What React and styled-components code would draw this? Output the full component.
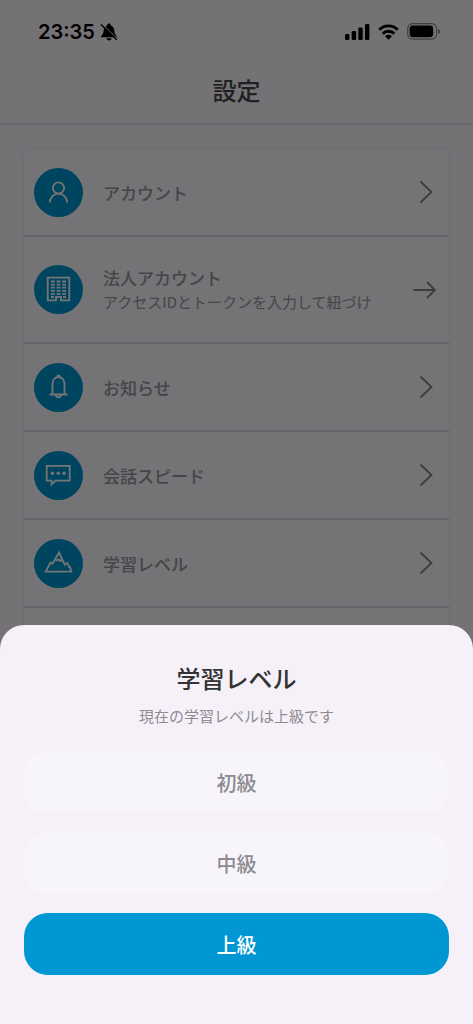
import React from "react";
import styled, { createGlobalStyle } from "styled-components";

const GlobalStyle = createGlobalStyle`
  * {
    box-sizing: border-box;
  }
  body {
    margin: 0;
    background: #fcf8ff;
    font-family: "Noto Sans CJK JP", sans-serif;
  }
  button {
    font-family: inherit;
    border: 0;
    cursor: pointer;
  }
`;

const Screen = styled.div`
  height: 100vh;
  overflow: hidden;
`;

const StatusBar = styled.div`
  display: flex;
  align-items: center;
  justify-content: space-between;
  height: 63px;
  padding: 0 32px 0 38px;
  color: #000;
`;

const Clock = styled.div`
  display: flex;
  align-items: center;
  gap: 5px;
  font-family: Inter, sans-serif;
  font-size: 20px;
  font-weight: 600;
`;

const Signals = styled.div`
  display: flex;
  align-items: center;
  gap: 8px;
`;

const Header = styled.header`
  display: flex;
  justify-content: center;
  height: 62px;
  padding-top: 9px;
  border-bottom: 2px solid #e9e5ed;

  h1 {
    margin: 0;
    color: #48474c;
    font-size: 24px;
    font-weight: 500;
    line-height: 36px;
  }
`;

const Card = styled.ul`
  list-style: none;
  margin: 24px;
  padding: 0 0 80px;
  border-radius: 8px;
  background: #fcfaff;
  box-shadow: 0 0 5px rgba(0, 0, 0, 0.1);
`;

const Row = styled.li`
  border-bottom: 2px solid #e0dde4;
`;

const RowButton = styled.button`
  display: flex;
  align-items: center;
  gap: 20px;
  width: 100%;
  min-height: ${props => (props.$tall ? "105px" : "86px")};
  padding: 0 10px;
  background: transparent;
  text-align: left;
`;

const IconCircle = styled.span`
  flex: none;
  height: 49px;
  border-radius: 50%;
  background: #0097d2;

  svg {
    display: block;
    fill: none;
    stroke: #fff;
    stroke-width: 1.8;
  }
`;

const RowText = styled.span`
  flex: 1;
  color: #98969d;

  strong {
    display: block;
    font-size: 17px;
    font-weight: 500;
    line-height: 25px;
  }
  small {
    display: block;
    font-size: 15px;
    line-height: 24px;
  }
`;

const Indicator = styled.svg`
  flex: none;
  width: 24px;
  height: 24px;
  margin-right: ${props => (props.$arrow ? "2px" : "0")};
  fill: none;
  stroke: #85838a;
  stroke-width: 1.8;
  stroke-linecap: round;
`;

const Scrim = styled.div`
  position: fixed;
  inset: 0;
  display: flex;
  align-items: flex-end;
  background: rgba(0, 0, 0, 0.54);
`;

const Sheet = styled.section`
  width: 100%;
  padding: 35px 24px 49px;
  border-radius: 24px 24px 0 0;
  background: #f6f1f9;
  text-align: center;

  h2 {
    margin: 0;
    color: #333;
    font-size: 24px;
    font-weight: 500;
    line-height: 36px;
  }
  p {
    margin: 8px 0 24px;
    color: #8e8c93;
    font-size: 15px;
    line-height: 23px;
  }
`;

const Options = styled.div`
  display: flex;
  flex-direction: column;
  gap: 19px;
`;

const OptionButton = styled.button`
  height: 62px;
  border-radius: 24px;
  background: ${props => (props.$selected ? "#0097d2" : "#f8f5fa")};
  color: ${props => (props.$selected ? "#fff" : "#8c8b8f")};
  font-size: 20px;
  font-weight: 500;
`;

const icons = {
  person: (
    <>
      <circle cx="24.5" cy="20" r="5.6" />
      <path d="M15.8 34.5c.4-5.200 3.800-8.900 8.700-8.900s8.300 3.700 8.700 8.900" />
    </>
  ),
  building: (
    <>
      <path d="M13.700 12.700h21.600v22.600h-8.300v-3.400h-5v3.400h-8.300z" />
      <path
        d="M17 16.500h15M17 19.600h15M17 22.700h15M17 25.800h15M17 28.900h15"
        strokeDasharray="3.800 1.800"
      />
      <path d="M17 32h3M29 32h3" />
    </>
  ),
  bell: (
    <>
      <path d="M15.500 31.500h18M18.500 31.500v-10.500c0-4 2.600-7 6-7s6 3 6 7v10.500" />
      <path d="M23.300 13.600a1.200 1.200 0 0 1 2.400 0M22.100 32a2.400 2.400 0 1 0 4.800 0" />
    </>
  ),
  chat: (
    <>
      <path d="M12.700 14.800h23v14.800h-14.200l-3.800 3.800v-3.800h-5z" />
      <g fill="#fff" stroke="none">
        <circle cx="18.500" cy="22.200" r="1.700" />
        <circle cx="24.300" cy="22.200" r="1.700" />
        <circle cx="30.100" cy="22.200" r="1.700" />
      </g>
    </>
  ),
  mountain: (
    <>
      <path d="M11.700 32.700l4.800-9.200 1.900 1.200 6.600-11.200 5.700 12.200 2.600-1.700 1.800 4 .8-.2 1.400 4.900z" />
      <path d="M21.400 20.700l1.800.8 1.600-1.300 1.600 1.800 2-1.200" />
    </>
  )
};

const settings = [
  { icon: "person", label: "アカウント" },
  {
    icon: "building",
    label: "法人アカウント",
    note: "アクセスIDとトークンを入力して紐づけ"
  },
  { icon: "bell", label: "お知らせ" },
  { icon: "chat", label: "会話スピード" },
  { icon: "mountain", label: "学習レベル" }
];

const levels = ["初級", "中級", "上級"];

const SettingRow = ({ icon, label, note }) => (
  <Row>
    <RowButton type="button" $tall={!!note}>
      <IconCircle>
        <svg width="49" height="49" viewBox="0 0 49 49">
          {icons[icon]}
        </svg>
      </IconCircle>
      <RowText>
        <strong>{label}</strong>
        {note && <small>{note}</small>}
      </RowText>
      <Indicator viewBox="0 0 24 24" $arrow={!!note}>
        {note ? (
          <path d="M1 12h21M14.500 4.500l7.500 7.500-7.500 7.500" />
        ) : (
          <path d="M6 2l10.500 10L6 22" />
        )}
      </Indicator>
    </RowButton>
  </Row>
);

const BellOff = () => (
  <svg width="18" height="18" viewBox="0 0 18 18">
    <path
      d="M1 14.200c0-1.800 2.200-2.300 2.500-5.400.2-3.400 1.300-5.300 3.500-6C7.200 1.200 8 .6 9 .6s1.800.6 2 2.200c2.200.7 3.300 2.600 3.500 6 .3 3.100 2.500 3.600 2.500 5.400zM6.300 15.300h5.400c-.4 1.400-1.500 2.200-2.700 2.200s-2.300-.8-2.700-2.200z"
      fill="#000"
    />
    <path d="M2 .9l15.600 15" stroke="#fcf8ff" strokeWidth="1" />
    <path d="M1 1.600l15.800 15.200" stroke="#000" strokeWidth="1.400" />
  </svg>
);

const App = () => {
  const [level, setLevel] = React.useState("上級");

  return (
    <>
      <GlobalStyle />
      <Screen>
        <StatusBar>
          <Clock>
            23:35
            <BellOff />
          </Clock>
          <Signals>
            <svg width="25" height="16" viewBox="0 0 25 16">
              <rect x="0" y="10" width="4.400" height="6" rx="1.300" />
              <rect x="6.700" y="7" width="4.400" height="9" rx="1.300" />
              <rect x="13.300" y="3.500" width="4.400" height="12.500" rx="1.300" />
              <rect x="20" y="0" width="4.400" height="16" rx="1.300" />
            </svg>
            <svg width="21" height="16" viewBox="0 0 21 16">
              <g fill="none" stroke="#000" strokeWidth="2.900">
                <path d="M1.300 5.700a13 13 0 0 1 18.400 0" />
                <path d="M4.700 9.600a8.200 8.200 0 0 1 11.600 0" />
              </g>
              <path d="M7 12.200a5 5 0 0 1 7 0L10.500 15.800z" />
            </svg>
            <svg width="34" height="17" viewBox="0 0 34 17">
              <rect
                x="0.700"
                y="0.700"
                width="29"
                height="15.400"
                rx="5"
                fill="none"
                stroke="#000"
                strokeOpacity="0.450"
                strokeWidth="1.200"
              />
              <rect x="2.600" y="2.600" width="23.600" height="11.600" rx="3.400" />
              <path d="M31.300 6c1.300.4 1.900 1.300 1.900 2.400s-.6 2-1.900 2.400z" fillOpacity="0.500" />
            </svg>
          </Signals>
        </StatusBar>
        <Header>
          <h1>設定</h1>
        </Header>
        <Card>
          {settings.map(item => (
            <SettingRow key={item.label} {...item} />
          ))}
        </Card>
      </Screen>
      <Scrim>
        <Sheet role="dialog" aria-labelledby="sheet-title">
          <h2 id="sheet-title">学習レベル</h2>
          <p>現在の学習レベルは{level}です</p>
          <Options>
            {levels.map(name => (
              <OptionButton
                key={name}
                type="button"
                $selected={name === level}
                onClick={() => setLevel(name)}
              >
                {name}
              </OptionButton>
            ))}
          </Options>
        </Sheet>
      </Scrim>
    </>
  );
};

export default App;
